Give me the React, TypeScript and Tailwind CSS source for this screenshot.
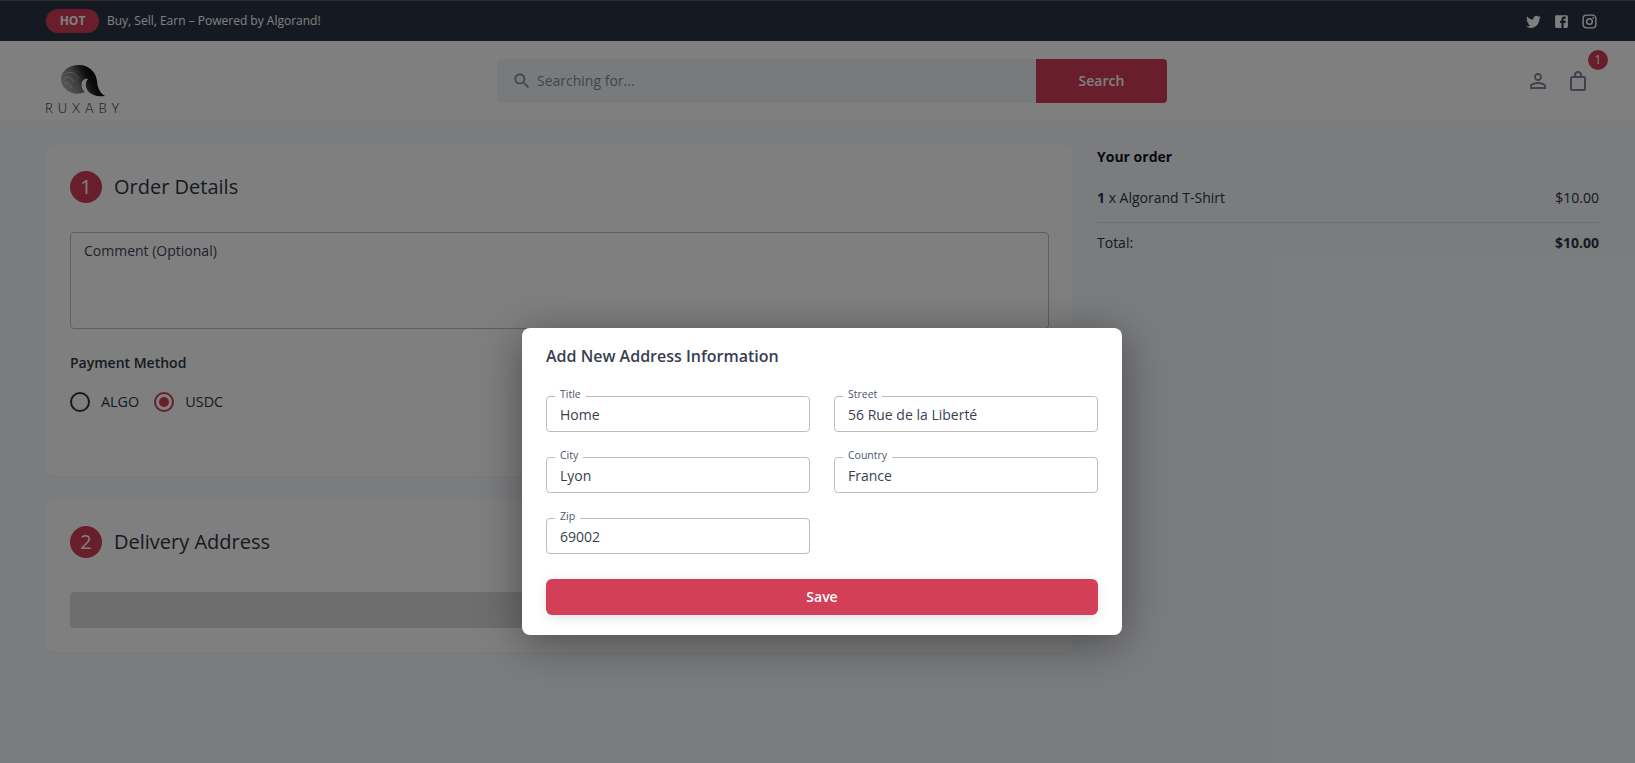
const font = "font-['Open_Sans',sans-serif]";

const TwitterIcon = () => (
  <svg viewBox="0 0 24 24" className="h-[17px] w-[17px] fill-current">
    <path d="M22.46 6c-.77.35-1.6.58-2.46.69.88-.53 1.56-1.37 1.88-2.38-.83.5-1.75.85-2.72 1.05C18.37 4.5 17.26 4 16 4c-2.35 0-4.27 1.92-4.27 4.29 0 .34.04.67.11.98C8.28 9.09 5.11 7.38 3 4.79c-.37.63-.58 1.37-.58 2.15 0 1.49.75 2.81 1.91 3.56-.71 0-1.37-.2-1.95-.5v.03c0 2.08 1.48 3.82 3.44 4.21a4.22 4.22 0 0 1-1.93.07 4.28 4.28 0 0 0 4 2.98 8.521 8.521 0 0 1-5.33 1.84c-.34 0-.68-.02-1.02-.06C3.44 20.29 5.7 21 8.12 21 16 21 20.33 14.46 20.33 8.79c0-.19 0-.37-.01-.56.84-.6 1.56-1.36 2.14-2.23z" />
  </svg>
);

const FacebookIcon = () => (
  <svg viewBox="0 0 24 24" className="h-[17px] w-[17px] fill-current">
    <path d="M5 3h14a2 2 0 0 1 2 2v14a2 2 0 0 1-2 2H5a2 2 0 0 1-2-2V5a2 2 0 0 1 2-2m13 2h-2.5A3.5 3.5 0 0 0 12 8.5V11h-2v3h2v7h3v-7h3v-3h-3V9a1 1 0 0 1 1-1h2V5z" />
  </svg>
);

const InstagramIcon = () => (
  <svg viewBox="0 0 24 24" className="h-[17px] w-[17px] fill-current">
    <path d="M7.8 2h8.4C19.4 2 22 4.6 22 7.8v8.4a5.8 5.8 0 0 1-5.8 5.8H7.8C4.6 22 2 19.4 2 16.2V7.8A5.8 5.8 0 0 1 7.8 2m-.2 2A3.6 3.6 0 0 0 4 7.6v8.8C4 18.39 5.61 20 7.6 20h8.8a3.6 3.6 0 0 0 3.6-3.6V7.6C20 5.61 18.39 4 16.4 4H7.6m9.65 1.5a1.25 1.25 0 0 1 1.25 1.25A1.25 1.25 0 0 1 17.25 8 1.25 1.25 0 0 1 16 6.75a1.25 1.25 0 0 1 1.25-1.25M12 7a5 5 0 0 1 5 5 5 5 0 0 1-5 5 5 5 0 0 1-5-5 5 5 0 0 1 5-5m0 2a3 3 0 0 0-3 3 3 3 0 0 0 3 3 3 3 0 0 0 3-3 3 3 0 0 0-3-3z" />
  </svg>
);

const Logo = () => (
  <div className="flex w-[76px] flex-col items-center pt-[17px]">
    <svg viewBox="0 0 44 31" className="ml-[1px] h-[33px] w-[44px]">
      <defs>
        <linearGradient id="shell" x1="0" y1="0.6" x2="0.85" y2="0.3">
          <stop offset="0" stopColor="#b4b4b4" />
          <stop offset="0.4" stopColor="#7c7c7c" />
          <stop offset="0.7" stopColor="#1c1c1c" />
          <stop offset="1" stopColor="#000000" />
        </linearGradient>
      </defs>
      <path
        d="M11 28C4 25 0 20 0 14 0 6 8 0 18 0c10 0 17 7 18 16 .5 7 3 12 8 15-7 1-14-1-17-5-3-4-3-9 0-12-3-1-5 1-6 3-1 4 0 8 3 10-5 2-9 2-13 1z"
        fill="url(#shell)"
      />
      <path d="M3 13c4-2 8 0 10 4M3 18c3-1 6 1 8 5M6 8c5-2 10 1 12 6" fill="none" stroke="#e0e0e0" strokeWidth="0.6" />
    </svg>
    <span className="mt-[5px] pl-[5px] font-['Lato',sans-serif] text-[13px] leading-[13px] font-light tracking-[0.38em] text-[#222222]">
      RUXABY
    </span>
  </div>
);

const StepTitle = ({ num, title }: { num: number; title: string }) => (
  <div className="flex items-center gap-3">
    <div className="flex h-8 w-8 items-center justify-center rounded-full bg-[#d23f57] text-xl leading-none text-white">
      {num}
    </div>
    <h2 className="text-xl leading-8 text-[#2b3445]">{title}</h2>
  </div>
);

const Radio = ({ label, checked }: { label: string; checked?: boolean }) => (
  <div className="flex items-center gap-[11px]">
    <span
      className={
        checked
          ? "flex h-5 w-5 items-center justify-center rounded-full border-2 border-[#d23f57]"
          : "h-5 w-5 rounded-full border-2 border-[#2b3445]"
      }
    >
      {checked && <span className="h-[10px] w-[10px] rounded-full bg-[#d23f57]" />}
    </span>
    <span className="text-[14.4px] leading-5 text-[#2b3445]">{label}</span>
  </div>
);

const Field = ({ label, value }: { label: string; value: string }) => (
  <div className="relative h-9 rounded border border-[#bdbdbd] px-[13px] pt-[1px] text-sm leading-[34px] text-[#373f50]">
    {value}
    <span className="absolute top-[-9px] left-[8px] bg-white px-[5px] text-[10.5px] leading-3 text-[#4b566b]">
      {label}
    </span>
  </div>
);

const App = () => {
  return (
    <div className={`${font} relative h-[763px] overflow-hidden bg-[#f6f9fc]`}>
      <div className="flex h-[41px] items-center justify-between border-t border-t-[#5a5a5a] bg-[#2b3445] pr-[37px] pl-[46px]">
        <div className="flex items-center gap-[8px]">
          <span className="flex h-6 w-[53px] items-center justify-center rounded-full bg-[#d23f57] text-xs font-bold text-white">
            HOT
          </span>
          <span className="text-xs text-white">Buy, Sell, Earn – Powered by Algorand!</span>
        </div>
        <div className="flex items-center gap-[11px] pt-[1px] text-white">
          <TwitterIcon />
          <FacebookIcon />
          <InstagramIcon />
        </div>
      </div>

      <header className="flex h-[79px] items-center bg-white pr-[36px] pl-[44px]">
        <Logo />
        <div className="ml-[377px] flex h-11 w-[670px]">
          <div className="flex flex-1 items-center gap-[5px] rounded-l bg-[#f3f5f9] pl-[15px]">
            <svg viewBox="0 0 24 24" className="h-5 w-5 fill-[#7d879c]">
              <path d="M15.5 14h-.79l-.28-.27C15.41 12.59 16 11.11 16 9.5 16 5.91 13.09 3 9.5 3S3 5.91 3 9.5 5.91 16 9.5 16c1.61 0 3.09-.59 4.23-1.57l.27.28v.79l5 4.99L20.49 19l-4.99-5zm-6 0C7.01 14 5 11.99 5 9.5S7.01 5 9.5 5 14 7.01 14 9.5 11.99 14 9.5 14z" />
            </svg>
            <span className="pt-[1px] text-sm text-[#4b566b]/70">Searching for...</span>
          </div>
          <div className="flex w-[131px] items-center justify-center rounded-r bg-[#d23f57] text-sm font-semibold text-white">
            Search
          </div>
        </div>
        <div className="ml-auto flex items-center gap-[16px] pt-[1px] pr-[9px] text-[#7d879c]">
          <svg viewBox="0 0 24 24" className="h-6 w-6 fill-current">
            <path d="M12 5.9c1.16 0 2.1.94 2.1 2.1s-.94 2.1-2.1 2.1S9.9 9.16 9.9 8s.94-2.1 2.1-2.1m0 9c2.97 0 6.1 1.46 6.1 2.1v1.1H5.9V17c0-.64 3.13-2.1 6.1-2.1M12 4C9.79 4 8 5.79 8 8s1.79 4 4 4 4-1.79 4-4-1.79-4-4-4zm0 9c-2.67 0-8 1.34-8 4v3h16v-3c0-2.66-5.33-4-8-4z" />
          </svg>
          <div className="relative">
            <svg viewBox="0 0 24 24" fill="none" stroke="currentColor" strokeWidth="2" className="h-6 w-6">
              <rect x="5" y="8" width="14" height="13" rx="1" />
              <path d="M9 8V6a3 3 0 0 1 6 0v2" />
            </svg>
            <span className="absolute top-[-19px] right-[-18px] flex h-5 w-5 items-center justify-center rounded-full bg-[#d23f57] text-xs text-white">
              1
            </span>
          </div>
        </div>
      </header>

      <main className="flex gap-6 pt-[25px] pr-[36px] pl-[46px]">
        <div className="flex w-[1027px] flex-col gap-[23px]">
          <section className="h-[331px] rounded-lg bg-white px-6 pt-[26px] shadow-[0_1px_3px_rgba(3,0,71,0.04)]">
            <StepTitle num={1} title="Order Details" />
            <div className="mt-[29px] h-[97px] rounded border border-[#bdbdbd] px-[13px] py-[8px] text-sm leading-5 text-[#3d475a]">
              Comment (Optional)
            </div>
            <p className="mt-[24px] text-sm leading-5 font-semibold text-[#2b3445]">Payment Method</p>
            <div className="mt-[19px] flex gap-[15px]">
              <Radio label="ALGO" />
              <Radio label="USDC" checked />
            </div>
          </section>
          <section className="h-[153px] rounded-lg bg-white px-6 pt-[27px] shadow-[0_1px_3px_rgba(3,0,71,0.04)]">
            <StepTitle num={2} title="Delivery Address" />
            <div className="mt-[34px] flex h-9 items-center justify-center rounded bg-[#dcdcdc] pl-3 text-sm font-semibold text-[#4b566b]">
              New Address
            </div>
          </section>
        </div>

        <aside className="flex-1 pt-[2px] text-sm text-[#2b3445]">
          <h3 className="leading-5 font-bold text-[#0f1322]">Your order</h3>
          <div className="mt-[21px] flex justify-between leading-5">
            <span>
              <b>1</b> x Algorand T-Shirt
            </span>
            <span>$10.00</span>
          </div>
          <hr className="mt-[14px] border-[#dae1e7]" />
          <div className="mt-[10px] flex justify-between leading-5">
            <span>Total:</span>
            <b>$10.00</b>
          </div>
        </aside>
      </main>

      {/* modal backdrop */}
      <div className="absolute inset-0 bg-black/50 pt-[328px] pl-[522px]">
        <div className="h-[307px] w-[600px] rounded-lg bg-white px-6 pt-[16px] shadow-[0_8px_45px_rgba(0,0,0,0.4)]">
          <h2 className="text-base leading-6 font-semibold text-[#373f50]">Add New Address Information</h2>
          <div className="mt-[28px] grid grid-cols-2 gap-x-6 gap-y-[25px]">
            <Field label="Title" value="Home" />
            <Field label="Street" value="56 Rue de la Liberté" />
            <Field label="City" value="Lyon" />
            <Field label="Country" value="France" />
            <Field label="Zip" value="69002" />
          </div>
          <button className="mt-[25px] h-9 w-full rounded-md bg-[#d23f57] text-sm font-semibold text-white shadow-[0_3px_12px_rgba(43,52,69,0.12)]">
            Save
          </button>
        </div>
      </div>
    </div>
  );
};

export default App;
